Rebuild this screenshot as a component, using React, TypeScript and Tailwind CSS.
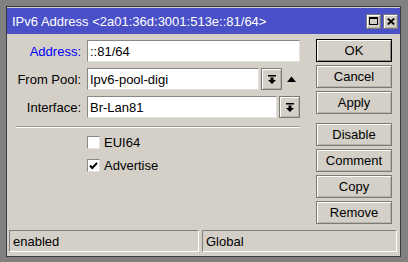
import React from "react"

const raised =
  "bg-[#d4d0c8] border border-[#7c7a76] shadow-[inset_1px_1px_0_#ffffff,inset_-1px_-1px_0_#b8b4ac]"
const sunken =
  "bg-white border border-t-[#8a8884] border-l-[#8a8884] border-b-[#e4e2de] border-r-[#e4e2de]"

function DropIcon() {
  return (
    <svg width="8" height="9" viewBox="0 0 8 9">
      <rect x="0" y="0" width="8" height="1.5" fill="#000" />
      <rect x="2.5" y="2.5" width="3" height="2.5" fill="#000" />
      <polygon points="0,5 8,5 4,9" fill="#000" />
    </svg>
  )
}

function DropButton() {
  return (
    <div className={`${raised} w-[21px] h-[22px] flex items-center justify-center`}>
      <DropIcon />
    </div>
  )
}

function Field({ label, value, blue, width, drop, up }: { label: string; value: string; blue?: boolean; width: string; drop?: boolean; up?: boolean }) {
  return (
    <div className="flex items-center h-[22px]">
      <div className={`w-[65px] text-right ${blue ? "text-[#0000ff]" : "text-black"}`}>{label}</div>
      <div className={`ml-[6px] ${width} h-[22px] ${sunken} flex items-center pl-[2px] text-black`}>{value}</div>
      {drop && (
        <div className="ml-[2px]">
          <DropButton />
        </div>
      )}
      {up && (
        <svg className="ml-[5px]" width="9" height="6" viewBox="0 0 9 6">
          <polygon points="0,6 9,6 4.5,0.5" fill="#000" />
        </svg>
      )}
    </div>
  )
}

function Check({ label, checked }: { label: string; checked?: boolean }) {
  return (
    <div className="flex items-center h-[16px] ml-[71px] gap-[4px]">
      <div className={`w-[13px] h-[13px] ${sunken} flex items-center justify-center`}>
        {checked && (
          <svg width="9" height="9" viewBox="0 0 9 9">
            <polyline points="1,4.5 3.3,7 8,1.8" fill="none" stroke="#000" strokeWidth="2" />
          </svg>
        )}
      </div>
      <span>{label}</span>
    </div>
  )
}

function Btn({ children, def }: { children: React.ReactNode; def?: boolean }) {
  const cls = def
    ? "bg-[#d4d0c8] border border-black shadow-[inset_1px_1px_0_#ffffff,inset_-1px_-1px_0_#8a8884]"
    : raised
  return <div className={`${cls} h-[23px] w-[76px] flex items-center justify-center text-black`}>{children}</div>
}

export default function App() {
  return (
    <div className="w-[408px] h-[262px] bg-[#808080] pt-[6px] pl-[6px] font-['Liberation_Sans',Arial,sans-serif] text-[13px] leading-none">
      <div className="w-[395px] h-[251px] bg-[#d4d0c8] border border-[#3a3a3a] flex flex-col">
        <div className="mt-[1px] h-[26px] bg-[#4a50c8] flex items-center pl-[5px] pr-[2px]">
          <span className="text-white text-[13px]">IPv6 Address &lt;2a01:36d:3001:513e::81/64&gt;</span>
          <div className="ml-auto flex gap-[2px]">
            <div className={`${raised} w-[15px] h-[15px] flex items-center justify-center`}>
              <svg width="9" height="8" viewBox="0 0 9 8">
                <rect x="0.5" y="0.5" width="8" height="7" fill="none" stroke="#000" />
                <rect x="0" y="0" width="9" height="2" fill="#000" />
              </svg>
            </div>
            <div className={`${raised} w-[15px] h-[15px] flex items-center justify-center`}>
              <svg width="8" height="7" viewBox="0 0 8 7">
                <path d="M0.8 0.5 L7.2 6.5 M7.2 0.5 L0.8 6.5" stroke="#000" strokeWidth="1.8" />
              </svg>
            </div>
          </div>
        </div>

        <div className="flex pl-[9px] pt-[5px]">
          <div className="w-[284px] mt-[1px] flex flex-col">
            <div className="flex flex-col gap-[6px]">
              <Field label="Address:" value="::81/64" blue width="w-[213px]" />
              <Field label="From Pool:" value="Ipv6-pool-digi" width="w-[172px]" drop up />
              <Field label="Interface:" value="Br-Lan81" width="w-[190px]" drop />
            </div>
            <div className="mt-[8px] border-t border-t-[#a09c94] border-b border-b-white" />
            <div className="mt-[6px] flex flex-col gap-[7px]">
              <Check label="EUI64" />
              <Check label="Advertise" checked />
            </div>
          </div>
          <div className="ml-[16px] flex flex-col gap-[3px]">
            <Btn def>OK</Btn>
            <Btn>Cancel</Btn>
            <Btn>Apply</Btn>
            <div className="mt-[6px]">
              <Btn>Disable</Btn>
            </div>
            <Btn>Comment</Btn>
            <Btn>Copy</Btn>
            <Btn>Remove</Btn>
          </div>
        </div>

        <div className="mt-auto mb-[4px] flex gap-[3px] px-[2px]">
          <div className="w-[190px] h-[22px] flex items-center pl-[3px] border border-t-[#808080] border-l-[#808080] border-b-white border-r-white">
            enabled
          </div>
          <div className="w-[195px] h-[22px] flex items-center pl-[3px] border border-t-[#808080] border-l-[#808080] border-b-white border-r-white">
            Global
          </div>
        </div>
      </div>
    </div>
  )
}
